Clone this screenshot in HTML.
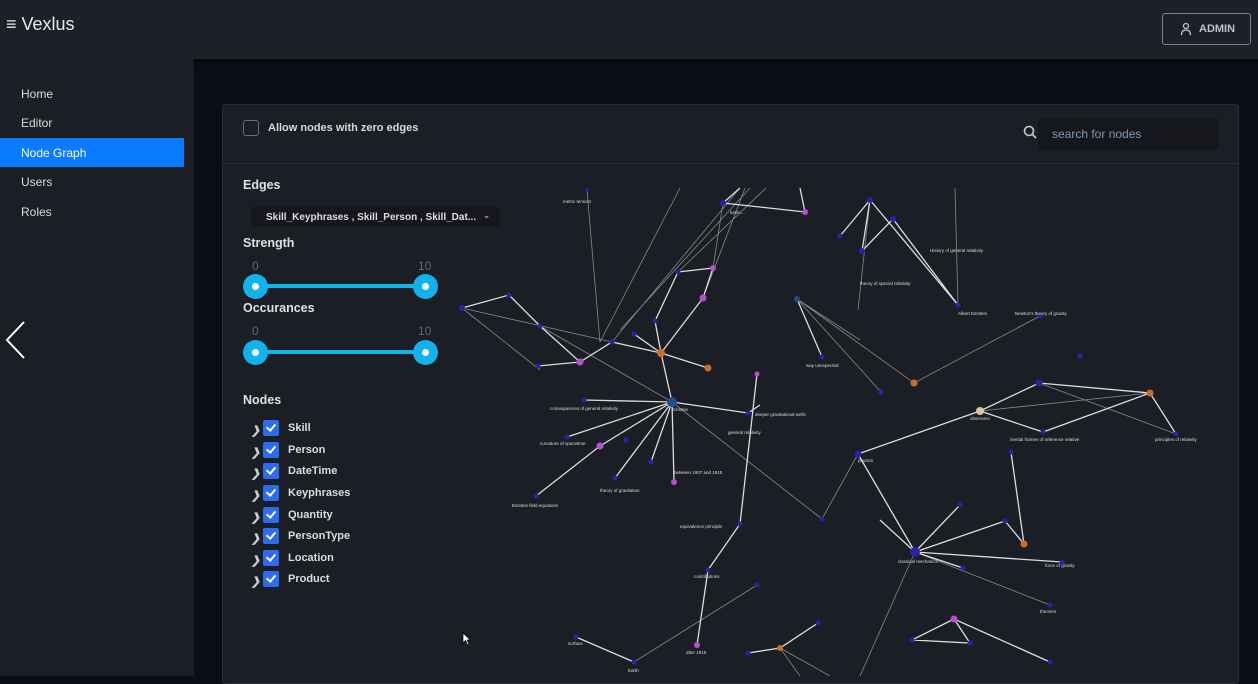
<!DOCTYPE html>
<html><head><meta charset="utf-8"><style>
*{box-sizing:border-box;margin:0;padding:0}
body{width:1258px;height:676px;overflow:hidden;background:#0b0e15;font-family:"Liberation Sans",Arial,sans-serif;color:#e6e6e6;position:relative}
.hdr{position:absolute;left:0;top:0;width:1258px;height:59px;background:#1e2027;box-shadow:0 2px 6px rgba(0,0,0,.6)}
.logo{position:absolute;left:6px;top:14px;font-size:18px;color:#e8e8e8}
.admin{position:absolute;left:1162px;top:13px;width:89px;height:32px;border:1px solid #7b7f88;border-radius:3px;color:#bfc3c9;font-size:11px;font-weight:bold;padding:9px 0 0 36px}
.side{position:absolute;left:0;top:59px;width:194px;height:617px;background:#1c1e25}
.side div{position:absolute;left:0;width:184px;height:29px;font-size:12px;padding:8px 0 0 21px;color:#dcdcdc}
.side .act{background:#0a7cff;color:#fff}
.card{position:absolute;left:222px;top:104px;width:1017px;height:580px;background:#1c1e25;border:1px solid #2a2d35;border-radius:3px}
.sep{position:absolute;left:0;top:58px;width:100%;height:1px;background:#2a2d35}
.cb0{position:absolute;left:20px;top:15px;width:16px;height:16px;border:1.5px solid #6a6e78;border-radius:3px}
.lbl{position:absolute;font-size:11px;font-weight:bold;color:#d8d8d8}
.h{position:absolute;font-size:12.5px;font-weight:bold;color:#e0e0e0}
.search{position:absolute;left:815px;top:13px;width:181px;height:32px;background:#15171d;border-radius:3px;font-size:12px;color:#7e9ab8;padding:9px 0 0 14px}
.sel{position:absolute;left:28px;top:102px;width:249px;height:20px;background:#15171d;border-radius:3px;font-size:10px;font-weight:bold;color:#ddd;padding:5px 0 0 15px}
.slider{position:absolute;left:20px;width:196px;height:24px}
.slider .bar{position:absolute;left:12px;top:10px;width:170px;height:4px;background:#12b3ea}
.slider .k{position:absolute;top:0;width:25px;height:25px;border-radius:50%;background:#12b3ea}
.slider .k:after{content:"";position:absolute;left:9px;top:9px;width:7px;height:7px;border-radius:50%;background:#fff}
.num{position:absolute;font-size:12px;color:#636877}
.node{position:absolute;left:28px;height:16px;font-size:11px;font-weight:bold;color:#dcdcdc}
.node .ch{position:absolute;left:0;top:2px;font-size:11px;color:#ccc}
.node .b{position:absolute;left:12px;top:-2px;width:16px;height:16px;background:#2d6bf0;border-radius:2px}
.node .b:after{content:"";position:absolute;left:5px;top:2px;width:4px;height:7px;border:solid #fff;border-width:0 2px 2px 0;transform:rotate(40deg)}
.node span{position:absolute;left:37px;top:0}
</style></head><body>
<div class="hdr"><div class="logo">≡ Vexlus</div>
<div class="admin"><svg style="position:absolute;left:17px;top:8px" width="12" height="14" viewBox="0 0 12 14"><circle cx="6" cy="4" r="2.5" fill="none" stroke="#bfc3c9" stroke-width="1.3"/><path d="M1.5 13 Q1.5 8 6 8 Q10.5 8 10.5 13" fill="none" stroke="#bfc3c9" stroke-width="1.3"/></svg>ADMIN</div></div>
<div class="side">
<div style="top:20px">Home</div><div style="top:49px">Editor</div><div class="act" style="top:79px">Node Graph</div><div style="top:108px">Users</div><div style="top:138px">Roles</div>
</div>
<svg style="position:absolute;left:4px;top:320px" width="22" height="40"><path d="M20 2 L3 20 L20 38" fill="none" stroke="#fff" stroke-width="2"/></svg>
<div class="card">
<div class="cb0"></div><div class="lbl" style="left:45px;top:17px">Allow nodes with zero edges</div>
<svg style="position:absolute;left:800px;top:20px" width="14" height="14"><circle cx="6" cy="6" r="4.5" fill="none" stroke="#ccc" stroke-width="1.6"/><path d="M9.5 9.5 L13 13" stroke="#ccc" stroke-width="1.6"/></svg>
<div class="search">search for nodes</div>
<div class="sep"></div>
<div class="h" style="left:20px;top:73px">Edges</div>
<div class="sel">Skill_Keyphrases , Skill_Person , Skill_Dat...<span style="position:absolute;right:10px;top:4px;font-size:8px;color:#aaa">⌄</span></div>
<div class="h" style="left:20px;top:131px">Strength</div>
<div class="num" style="left:29px;top:154px">0</div><div class="num" style="left:195px;top:154px">10</div>
<div class="slider" style="top:169px"><div class="bar"></div><div class="k" style="left:0"></div><div class="k" style="left:170px"></div></div>
<div class="h" style="left:20px;top:196px">Occurances</div>
<div class="num" style="left:29px;top:219px">0</div><div class="num" style="left:195px;top:219px">10</div>
<div class="slider" style="top:235px"><div class="bar"></div><div class="k" style="left:0"></div><div class="k" style="left:170px"></div></div>
<div class="h" style="left:20px;top:288px">Nodes</div>
<div class="node" style="top:317px"><i class="ch">❯</i><i class="b"></i><span>Skill</span></div>
<div class="node" style="top:339px"><i class="ch">❯</i><i class="b"></i><span>Person</span></div>
<div class="node" style="top:360px"><i class="ch">❯</i><i class="b"></i><span>DateTime</span></div>
<div class="node" style="top:382px"><i class="ch">❯</i><i class="b"></i><span>Keyphrases</span></div>
<div class="node" style="top:404px"><i class="ch">❯</i><i class="b"></i><span>Quantity</span></div>
<div class="node" style="top:425px"><i class="ch">❯</i><i class="b"></i><span>PersonType</span></div>
<div class="node" style="top:447px"><i class="ch">❯</i><i class="b"></i><span>Location</span></div>
<div class="node" style="top:468px"><i class="ch">❯</i><i class="b"></i><span>Product</span></div>
</div>
<svg style="position:absolute;left:0;top:0" width="1258" height="676">
<g stroke="#888" stroke-width="0.8" fill="none">
<path d="M587 190L600 342M740 188L612 342M766 188L678 272M723 203L713 268M745 188L703 298M462 308L612 342M462 308L540 370M672 402L540 326M797 299L881 392M797 299L914 383M958 305L955 188M870 200L858 310M980 411L1150 393M1039 383L1176 434M915 552L1050 605M858 454L822 519M672 402L822 519M915 552L860 676M780 648L818 623M780 648L830 676M780 648L800 676M634 662L757 585M1040 316L914 383M600 342L680 188M620 330L750 188M797 299L860 340"/>
</g>
<g stroke="#ddd" stroke-width="1.3" fill="none">
<path d="M462 308L509 295L540 326L580 362L612 342L661 353L672 402L600 446L536 496M661 353L703 298L713 268L678 272L655 321L661 353M672 402L674 482M672 402L651 462M672 402L615 478M672 402L584 400M672 402L567 437M672 402L748 413M757 374L740 524L708 570L697 645M748 413L760 405M858 454L980 411L1039 383L1150 393L1176 434M980 411L1043 432L1150 393M858 454L915 552L960 505M915 552L1005 521L1024 544L1011 452M915 552L1062 562M915 552L963 568M915 552L880 520M954 619L912 640L970 643L954 619L1050 662M576 637L634 662M748 653L780 648L818 623M723 203L805 212M723 203L740 188M805 212L800 188M870 200L862 251L893 219L958 305L870 200M840 236L870 200M797 299L822 357M580 362L538 366M634 334L661 353M661 353L708 368M1024 544L1005 521"/>
</g>
<g>
<circle cx="672" cy="402" r="5" fill="#1e4f8a"/><circle cx="661" cy="353" r="4" fill="#c8702a"/><circle cx="708" cy="368" r="3.5" fill="#c8702a"/>
<circle cx="580" cy="362" r="3.5" fill="#b64fd0"/><circle cx="600" cy="446" r="3.5" fill="#b64fd0"/><circle cx="703" cy="298" r="3.5" fill="#b64fd0"/><circle cx="713" cy="268" r="3" fill="#b64fd0"/>
<circle cx="858" cy="454" r="3.5" fill="#2a22a8"/><circle cx="915" cy="552" r="5" fill="#2a22a8"/><circle cx="980" cy="411" r="4" fill="#d8c7a0"/>
<circle cx="1150" cy="393" r="3.5" fill="#c8702a"/><circle cx="1024" cy="544" r="3.5" fill="#c8702a"/><circle cx="914" cy="383" r="3.5" fill="#c8702a"/>
<circle cx="1039" cy="383" r="3.5" fill="#2a22a8"/><circle cx="954" cy="619" r="3.5" fill="#b64fd0"/><circle cx="780" cy="648" r="3" fill="#c8702a"/>
<circle cx="674" cy="482" r="3" fill="#b64fd0"/><circle cx="697" cy="645" r="3" fill="#b64fd0"/><circle cx="805" cy="212" r="3" fill="#b64fd0"/>
<circle cx="797" cy="299" r="3" fill="#1e4f8a"/><circle cx="757" cy="374" r="2.5" fill="#b64fd0"/>
<g fill="#2a22a8"><circle cx="723" cy="203" r="3"/><circle cx="870" cy="200" r="3"/><circle cx="862" cy="251" r="3"/><circle cx="893" cy="219" r="3"/><circle cx="958" cy="305" r="2.5"/><circle cx="822" cy="357" r="2.5"/><circle cx="881" cy="392" r="2.5"/><circle cx="1040" cy="316" r="2.5"/><circle cx="1080" cy="356" r="2.5"/><circle cx="1176" cy="434" r="2.5"/><circle cx="1043" cy="432" r="2.5"/><circle cx="1011" cy="452" r="2.5"/><circle cx="960" cy="505" r="2.5"/><circle cx="1005" cy="521" r="2.5"/><circle cx="1062" cy="562" r="2.5"/><circle cx="1050" cy="605" r="2.5"/><circle cx="963" cy="568" r="2.5"/><circle cx="822" cy="519" r="2.5"/><circle cx="740" cy="524" r="2.5"/><circle cx="708" cy="570" r="2.5"/><circle cx="757" cy="585" r="2.5"/><circle cx="576" cy="637" r="2.5"/><circle cx="634" cy="662" r="2.5"/><circle cx="818" cy="623" r="2.5"/><circle cx="912" cy="640" r="2.5"/><circle cx="970" cy="643" r="2.5"/><circle cx="1050" cy="662" r="2.5"/><circle cx="536" cy="496" r="2.5"/><circle cx="567" cy="437" r="2.5"/><circle cx="615" cy="478" r="2.5"/><circle cx="651" cy="462" r="2.5"/><circle cx="626" cy="440" r="2.5"/><circle cx="584" cy="400" r="2.5"/><circle cx="612" cy="342" r="2.5"/><circle cx="634" cy="334" r="2.5"/><circle cx="678" cy="272" r="2.5"/><circle cx="655" cy="321" r="2.5"/><circle cx="509" cy="295" r="2.5"/><circle cx="540" cy="326" r="2.5"/><circle cx="462" cy="308" r="3"/><circle cx="538" cy="366" r="2.5"/><circle cx="748" cy="413" r="2.5"/><circle cx="587" cy="190" r="2"/><circle cx="748" cy="653" r="2.5"/><circle cx="840" cy="236" r="2.5"/></g>
</g>
<g fill="#ddd" font-size="4.5" font-family="Liberation Sans">
<text x="672" y="411">Einstein</text><text x="858" y="462">physics</text><text x="898" y="563">classical mechanics</text><text x="970" y="420">observers</text><text x="958" y="315">Albert Einstein</text><text x="930" y="252">History of general relativity</text><text x="512" y="507">Einstein field equations</text><text x="550" y="410">consequences of general relativity</text><text x="540" y="445">curvature of spacetime</text><text x="674" y="474">between 1907 and 1915</text><text x="1015" y="315">Newton's theory of gravity</text><text x="1155" y="441">principles of relativity</text><text x="1010" y="441">inertial frames of reference relative</text><text x="806" y="367">way unexpected</text><text x="680" y="528">equivalence principle</text><text x="1045" y="567">force of gravity</text><text x="1040" y="613">theories</text><text x="860" y="285">theory of special relativity</text><text x="563" y="203">metric tensors</text><text x="730" y="214">lumin...</text><text x="600" y="492">theory of gravitation</text><text x="694" y="578">contributions</text><text x="686" y="654">after 1915</text><text x="628" y="672">Earth</text><text x="568" y="645">surface</text><text x="728" y="434">general relativity</text><text x="755" y="416">deeper gravitational wells</text>
</g>
</svg>
<svg style="position:absolute;left:462px;top:632px" width="10" height="14"><path d="M1 1 L1 11 L3.5 8.5 L5.5 13 L7 12.3 L5 8 L8.5 8 Z" fill="#fff" stroke="#000" stroke-width="0.7"/></svg>
</body></html>
